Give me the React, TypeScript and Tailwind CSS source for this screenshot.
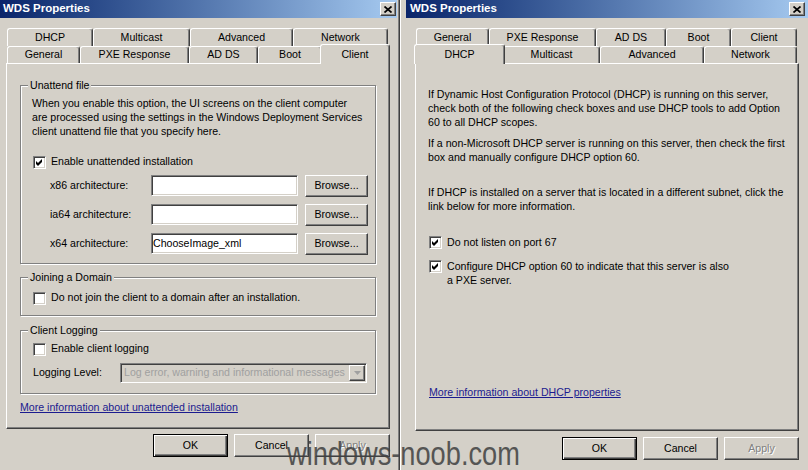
import React from "react";

type TabDef = { label: string; w: string; selected?: boolean };

const leftBack: TabDef[] = [
  { label: "DHCP", w: "w-[86px]" },
  { label: "Multicast", w: "w-[97px]" },
  { label: "Advanced", w: "w-[103px]" },
  { label: "Network", w: "w-[95px]" },
];
const leftFront: TabDef[] = [
  { label: "General", w: "w-[73px]" },
  { label: "PXE Response", w: "w-[109px]" },
  { label: "AD DS", w: "w-[69px]" },
  { label: "Boot", w: "w-[64px]" },
  { label: "Client", w: "w-[70px]", selected: true },
];
const rightBack: TabDef[] = [
  { label: "General", w: "w-[73px]" },
  { label: "PXE Response", w: "w-[107px]" },
  { label: "AD DS", w: "w-[70px]" },
  { label: "Boot", w: "w-[65px]" },
  { label: "Client", w: "w-[66px]" },
];
const rightFront: TabDef[] = [
  { label: "DHCP", w: "w-[91px]", selected: true },
  { label: "Multicast", w: "w-[97px]" },
  { label: "Advanced", w: "w-[104px]" },
  { label: "Network", w: "w-[93px]" },
];

function CloseButton() {
  return (
    <div className="flex h-[14px] w-[16px] items-center justify-center border-l border-t border-r border-b border-l-white border-t-white border-r-[#404040] border-b-[#404040] bg-[#d4d0c8] shadow-[inset_-1px_-1px_0_#808080]">
      <svg width="8" height="7" viewBox="0 0 8 7">
        <path d="M0.5 0.5 L7.5 6.5 M7.5 0.5 L0.5 6.5" stroke="#000" strokeWidth="1.7" />
      </svg>
    </div>
  );
}

function TitleBar({ className }: { className: string }) {
  return (
    <div className={`flex h-[18px] shrink-0 items-center justify-between bg-linear-to-r from-[#0a246a] to-[#a6caf0] ${className}`}>
      <span className="text-[11.5px] font-bold leading-none text-white">WDS Properties</span>
      <CloseButton />
    </div>
  );
}

function Tab({ tab }: { tab: TabDef }) {
  if (tab.selected) {
    return (
      <div className={`${tab.w} relative z-10 -mx-[2px] -mb-px flex h-[20px] justify-center rounded-t-[3px] border-l border-t border-r border-l-white border-t-white border-r-[#404040] bg-[#d4d0c8] pt-[2px] shadow-[inset_-1px_0_0_#808080]`}>
        {tab.label}
      </div>
    );
  }
  return (
    <div className={`${tab.w} flex h-full items-center justify-center rounded-t-[3px] border-l border-t border-r border-l-white border-t-white border-r-[#404040] shadow-[inset_-1px_0_0_#808080]`}>
      {tab.label}
    </div>
  );
}

function Tabs({ back, front }: { back: TabDef[]; front: TabDef[] }) {
  return (
    <div className="ml-[1px] flex flex-col">
      <div className="flex h-[18px]">
        {back.map((t) => (
          <Tab key={t.label} tab={t} />
        ))}
      </div>
      <div className="flex h-[17px] items-end">
        {front.map((t) => (
          <Tab key={t.label} tab={t} />
        ))}
      </div>
    </div>
  );
}

function Checkbox({ checked }: { checked?: boolean }) {
  return (
    <div className="flex h-[13px] w-[13px] shrink-0 items-center justify-center border-l border-t border-r border-b border-l-[#808080] border-t-[#808080] border-r-white border-b-white bg-white shadow-[inset_1px_1px_0_#404040,inset_-1px_-1px_0_#d4d0c8]">
      {checked && (
        <svg width="7" height="7" viewBox="0 0 7 7">
          <path d="M0 2 L2 4 L6 0 L6 3 L2 7 L0 5 Z" fill="#000" />
        </svg>
      )}
    </div>
  );
}

function Check({ label, checked, className = "" }: { label: string; checked?: boolean; className?: string }) {
  return (
    <div className={`flex h-[14px] items-center gap-[5px] whitespace-nowrap ${className}`}>
      <Checkbox checked={checked} />
      <span>{label}</span>
    </div>
  );
}

function Button({ label, primary, disabled }: { label: string; primary?: boolean; disabled?: boolean }) {
  if (primary) {
    return (
      <div className="flex h-[23px] w-[75px] items-center justify-center border border-black bg-[#d4d0c8] shadow-[inset_1px_1px_0_#fff,inset_-1px_-1px_0_#404040,inset_-2px_-2px_0_#808080]">
        {label}
      </div>
    );
  }
  return (
    <div
      className={`flex h-[23px] w-[75px] items-center justify-center border-l border-t border-r border-b border-l-white border-t-white border-r-[#404040] border-b-[#404040] bg-[#d4d0c8] shadow-[inset_-1px_-1px_0_#808080] ${
        disabled ? "text-[#808080] [text-shadow:1px_1px_0_#fff]" : ""
      }`}
    >
      {label}
    </div>
  );
}

function Group({ title, className = "", children }: { title: string; className?: string; children: React.ReactNode }) {
  return (
    <fieldset className={`w-[356px] border border-[#808080] shadow-[inset_1px_1px_0_#fff,1px_1px_0_#fff] ${className}`}>
      <legend className="ml-[7px] bg-[#d4d0c8] px-[2px] leading-[14px]">{title}</legend>
      {children}
    </fieldset>
  );
}

function PathRow({ label, value = "" }: { label: string; value?: string }) {
  return (
    <div className="flex h-[22px] items-start">
      <span className="ml-[18px] w-[101px] shrink-0 self-center">{label}</span>
      <div className="h-[21px] w-[147px] border-l border-t border-r border-b border-l-[#808080] border-t-[#808080] border-r-white border-b-white bg-white pl-[1px] leading-[19px] shadow-[inset_1px_1px_0_#404040,inset_-1px_-1px_0_#d4d0c8]">
        {value}
      </div>
      <div className="ml-[7px] flex h-[22px] w-[63px] items-center justify-center border-l border-t border-r border-b border-l-white border-t-white border-r-[#404040] border-b-[#404040] shadow-[inset_-1px_-1px_0_#808080]">
        Browse...
      </div>
    </div>
  );
}

function Panel({ h, className, children }: { h: string; className: string; children: React.ReactNode }) {
  return (
    <div className={`flex w-[384px] flex-col border-l border-t border-r border-b border-l-white border-t-white border-r-[#404040] border-b-[#404040] shadow-[inset_-1px_-1px_0_#808080] ${h} ${className}`}>
      {children}
    </div>
  );
}

function Buttons({ className }: { className: string }) {
  return (
    <div className={`flex w-[384px] justify-end gap-[6px] ${className}`}>
      <Button label="OK" primary />
      <Button label="Cancel" />
      <Button label="Apply" disabled />
    </div>
  );
}

function ClientWindow() {
  return (
    <div className="flex w-[400px] shrink-0 flex-col border-r border-[#404040] shadow-[inset_-1px_0_0_#808080]">
      <TitleBar className="mr-[2px] pl-[3px] pr-[1px]" />
      <div className="flex flex-col pl-[6px] pt-[10px]">
        <Tabs back={leftBack} front={leftFront} />
        <Panel h="h-[366px]" className="pl-[13px] pt-[14px]">
          <Group title="Unattend file">
            <div className="flex flex-col pb-[8px] pl-[11px] pt-[4px]">
              <p className="whitespace-nowrap leading-[14px]">
                When you enable this option, the UI screens on the client computer
                <br />
                are processed using the settings in the Windows Deployment Services
                <br />
                client unattend file that you specify here.
              </p>
              <Check label="Enable unattended installation" checked className="ml-[1px] mt-[17px]" />
              <div className="mt-[6px] flex flex-col gap-[7px]">
                <PathRow label="x86 architecture:" />
                <PathRow label="ia64 architecture:" />
                <PathRow label="x64 architecture:" value="ChooseImage_xml" />
              </div>
            </div>
          </Group>
          <Group title="Joining a Domain" className="mt-[6px]">
            <div className="pb-[10px] pl-[12px] pt-[7px]">
              <Check label="Do not join the client to a domain after an installation." />
            </div>
          </Group>
          <Group title="Client Logging" className="mt-[7px]">
            <div className="flex flex-col pb-[10px] pl-[12px] pt-[5px]">
              <Check label="Enable client logging" />
              <div className="mt-[7px] flex h-[20px] items-center">
                <span className="w-[87px] shrink-0">Logging Level:</span>
                <div className="flex h-[20px] w-[247px] items-center justify-between whitespace-nowrap border-l border-t border-r border-b border-l-[#808080] border-t-[#808080] border-r-white border-b-white pl-[3px] pr-[1px] text-[#a0a0a0] shadow-[inset_1px_1px_0_#404040,inset_-1px_-1px_0_#d4d0c8]">
                  <span>Log error, warning and informational messages</span>
                  <div className="flex h-[16px] w-[16px] items-center justify-center border-l border-t border-r border-b border-l-white border-t-white border-r-[#404040] border-b-[#404040] shadow-[inset_-1px_-1px_0_#808080]">
                    <svg width="7" height="4" viewBox="0 0 7 4">
                      <path d="M0 0 H7 L3.5 4 Z" fill="#a0a0a0" />
                    </svg>
                  </div>
                </div>
              </div>
            </div>
          </Group>
          <a className="mt-[6px] w-fit leading-[14px] text-[#1b1b8f] underline">More information about unattended installation</a>
        </Panel>
        <Buttons className="mt-[5px]" />
      </div>
    </div>
  );
}

function DhcpWindow() {
  return (
    <div className="flex flex-1 flex-col border-l border-white pl-[5px]">
      <TitleBar className="pl-[4px] pr-[3px]" />
      <div className="flex flex-col pl-[9px] pt-[10px]">
        <Tabs back={rightBack} front={rightFront} />
        <Panel h="h-[368px]" className="whitespace-nowrap pl-[12px] pt-[23px] leading-[14px]">
          <p>
            If Dynamic Host Configuration Protocol (DHCP) is running on this server,
            <br />
            check both of the following check boxes and use DHCP tools to add Option
            <br />
            60 to all DHCP scopes.
          </p>
          <p className="mt-[7px]">
            If a non-Microsoft DHCP server is running on this server, then check the first
            <br />
            box and manually configure DHCP option 60.
          </p>
          <p className="mt-[21px]">
            If DHCP is installed on a server that is located in a different subnet, click the
            <br />
            link below for more information.
          </p>
          <Check label="Do not listen on port 67" checked className="ml-[1px] mt-[22px]" />
          <Check label="Configure DHCP option 60 to indicate that this server is also" checked className="ml-[1px] mt-[10px]" />
          <span className="ml-[19px]">a PXE server.</span>
          <a className="ml-[1px] mt-[98px] w-fit text-[#1b1b8f] underline">More information about DHCP properties</a>
        </Panel>
        <Buttons className="mt-[6px]" />
      </div>
    </div>
  );
}

export default function App() {
  return (
    <div className="relative flex h-[470px] w-[808px] overflow-hidden bg-[#d4d0c8] font-['Liberation_Sans',Arial,sans-serif] text-[10.6px] text-black">
      <ClientWindow />
      <DhcpWindow />
      <div className="pointer-events-none absolute left-[287px] top-[436px] origin-left scale-x-[0.8] whitespace-nowrap font-['Liberation_Sans',Arial,sans-serif] text-[34px] leading-[34px] text-[#404040] opacity-85">
        windows-noob.com
      </div>
    </div>
  );
}
